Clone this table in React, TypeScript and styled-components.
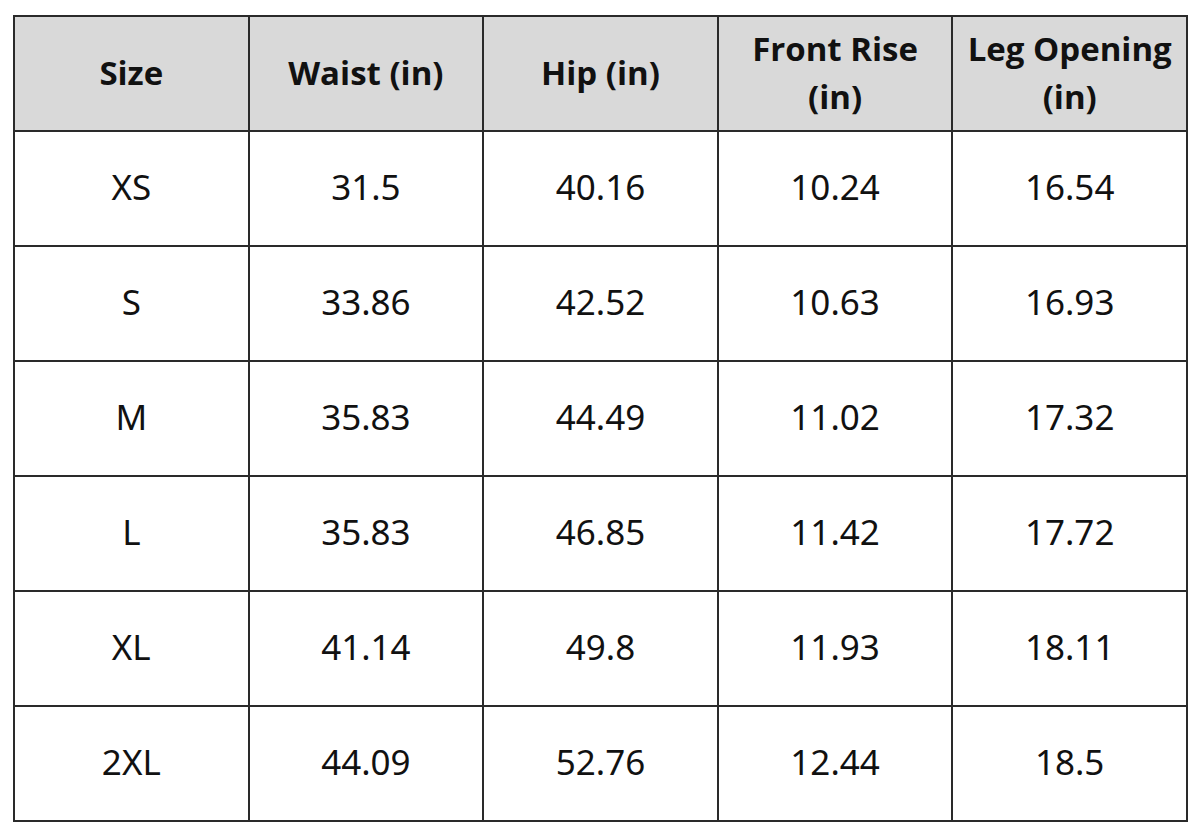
import styled, { createGlobalStyle } from 'styled-components';

const GlobalStyle = createGlobalStyle`
  html, body {
    margin: 0;
    padding: 0;
    background: #ffffff;
  }
`;

const Page = styled.div`
  padding: 15px 0 0 13px;
`;

const Table = styled.table`
  border-collapse: collapse;
  table-layout: fixed;
  width: 1175px;
  color: #111111;
`;

const HeadCell = styled.th`
  background: #d9d9d9;
  border: 2px solid #2a2a2a;
  height: 111px;
  padding: 0 4px 2px;
  font-family: 'Open Sans', sans-serif;
  font-weight: 700;
  font-size: 33px;
  line-height: 48px;
  text-align: center;
  vertical-align: middle;
`;

const Cell = styled.td`
  border: 2px solid #2a2a2a;
  height: 109px;
  padding: 0 0 4px;
  font-family: 'Noto Sans', sans-serif;
  font-weight: 400;
  font-size: 35px;
  text-align: center;
  vertical-align: middle;
`;

const columns = ['Size', 'Waist (in)', 'Hip (in)', 'Front Rise (in)', 'Leg Opening (in)'];

const rows = [
  ['XS', '31.5', '40.16', '10.24', '16.54'],
  ['S', '33.86', '42.52', '10.63', '16.93'],
  ['M', '35.83', '44.49', '11.02', '17.32'],
  ['L', '35.83', '46.85', '11.42', '17.72'],
  ['XL', '41.14', '49.8', '11.93', '18.11'],
  ['2XL', '44.09', '52.76', '12.44', '18.5'],
];

export default function App() {
  return (
    <>
      <GlobalStyle />
      <Page>
        <Table>
          <thead>
            <tr>
              {columns.map((c) => (
                <HeadCell key={c}>{c}</HeadCell>
              ))}
            </tr>
          </thead>
          <tbody>
            {rows.map((r) => (
              <tr key={r[0]}>
                {r.map((v, i) => (
                  <Cell key={i}>{v}</Cell>
                ))}
              </tr>
            ))}
          </tbody>
        </Table>
      </Page>
    </>
  );
}
